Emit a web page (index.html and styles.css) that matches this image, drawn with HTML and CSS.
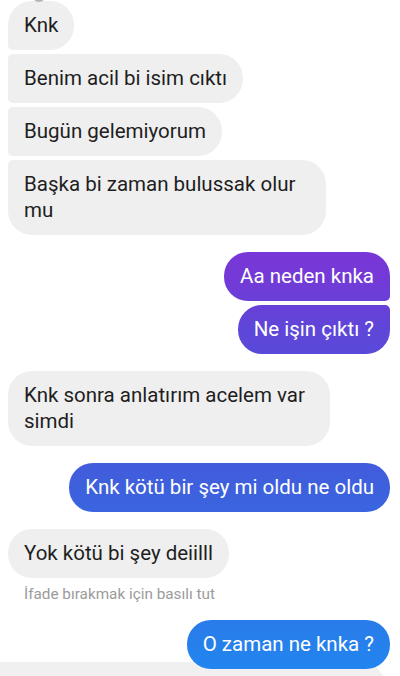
FILE: index.html
```html
<!DOCTYPE html>
<html lang="tr">
<head>
<meta charset="utf-8">
<title>Sohbet</title>
<link rel="stylesheet" href="styles.css">
</head>
<body>
<div class="chat">
  <span class="seen-dot"></span>
  <div class="group in">
    <div class="bubble first">Knk</div>
    <div class="bubble mid">Benim acil bi isim cıktı</div>
    <div class="bubble mid">Bugün gelemiyorum</div>
    <div class="bubble last w-318">Başka bi zaman bulussak olur mu</div>
  </div>
  <div class="group out">
    <div class="bubble first">Aa neden knka</div>
    <div class="bubble last">Ne işin çıktı ?</div>
  </div>
  <div class="group in">
    <div class="bubble single w-322">Knk sonra anlatırım acelem var simdi</div>
  </div>
  <div class="group out">
    <div class="bubble single">Knk kötü bir şey mi oldu ne oldu</div>
  </div>
  <div class="group in">
    <div class="bubble single">Yok kötü bi şey deiilll</div>
    <div class="hint">İfade bırakmak için basılı tut</div>
  </div>
  <div class="group out">
    <div class="bubble single top">O zaman ne knka ?</div>
  </div>
  <div class="sheet"></div>
</div>
</body>
</html>
```
FILE: styles.css
```css
html, body {
  margin: 0;
  padding: 0;
  background: #ffffff;
}
body {
  width: 400px;
  height: 676px;
  overflow: hidden;
  font-family: Roboto, "Noto Sans", "Liberation Sans", sans-serif;
}
.chat {
  position: relative;
  height: 676px;
  padding: 1px 10px 0 8px;
  box-sizing: border-box;
  display: flex;
  flex-direction: column;
  gap: 17px;
}
.seen-dot {
  position: absolute;
  left: 32px;
  top: -12px;
  width: 14px;
  height: 14px;
  border-radius: 50%;
  background: #b5b5b5;
}
.group {
  display: flex;
  flex-direction: column;
  gap: 4px;
}
.group.in { align-items: flex-start; }
.group.out { align-items: flex-end; }
.bubble {
  font-size: 20.5px;
  line-height: 26px;
  padding: 11px 16px 12px;
  border-radius: 24px;
  box-sizing: border-box;
  max-width: 330px;
}
.bubble.w-318 { max-width: 318px; }
.bubble.w-322 { max-width: 322px; }
.in .bubble {
  background: #efefef;
  color: #1e1e1e;
}
.out .bubble {
  color: #ffffff;
  background-image: linear-gradient(to bottom,
    rgb(124, 52, 214) 230px,
    rgb(116, 57, 215) 276px,
    rgb(94, 70, 216) 330px,
    rgb(62, 96, 221) 487px,
    rgb(38, 128, 236) 644px,
    rgb(32, 134, 240) 676px);
  background-attachment: fixed;
}
.in .first { border-bottom-left-radius: 5px; }
.in .mid { border-top-left-radius: 5px; border-bottom-left-radius: 5px; }
.in .last { border-top-left-radius: 5px; }
.out .first { border-bottom-right-radius: 5px; }
.out .last { border-top-right-radius: 5px; }
.hint {
  font-size: 15.3px;
  line-height: 18px;
  color: #9b9b9b;
  padding: 3px 0 0 16px;
}
.bubble.top {
  position: relative;
  z-index: 2;
}
.sheet {
  position: absolute;
  left: 0;
  top: 662px;
  width: 385px;
  height: 40px;
  background: #f0f0f0;
  border-top-right-radius: 24px;
  z-index: 1;
}
```
